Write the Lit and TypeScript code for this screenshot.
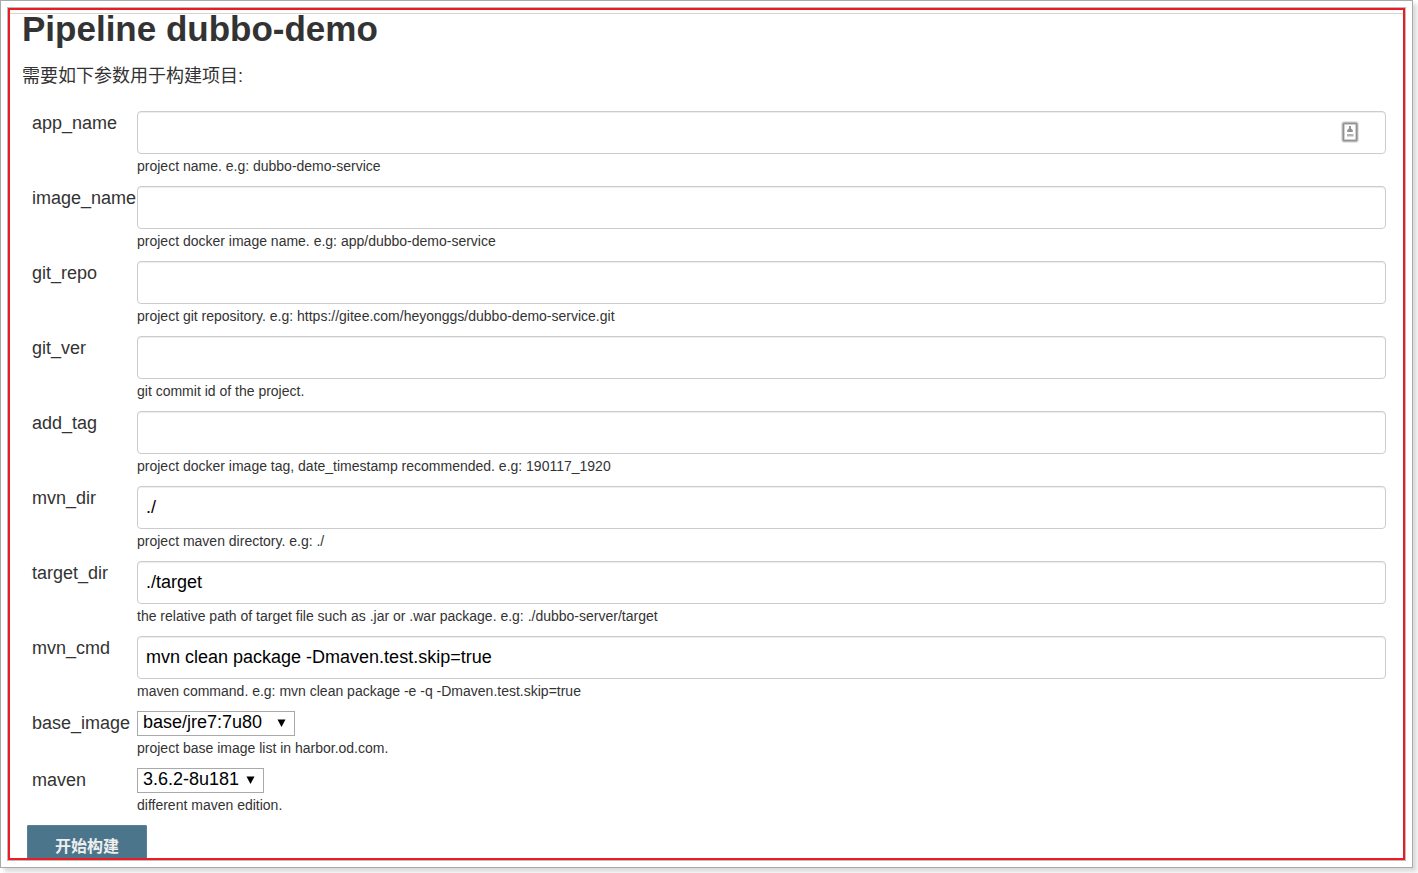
import { LitElement, html, css, nothing } from "lit";
import { customElement } from "lit/decorators.js";

interface Param {
  name: string;
  hint: string;
  value?: string;
  select?: boolean;
  wide?: boolean;
  autofill?: boolean;
}

const PARAMS: Param[] = [
  { name: "app_name", hint: "project name. e.g: dubbo-demo-service", autofill: true },
  { name: "image_name", hint: "project docker image name. e.g: app/dubbo-demo-service" },
  { name: "git_repo", hint: "project git repository. e.g: https://gitee.com/heyonggs/dubbo-demo-service.git" },
  { name: "git_ver", hint: "git commit id of the project." },
  { name: "add_tag", hint: "project docker image tag, date_timestamp recommended. e.g: 190117_1920" },
  { name: "mvn_dir", hint: "project maven directory. e.g: ./", value: "./" },
  {
    name: "target_dir",
    hint: "the relative path of target file such as .jar or .war package. e.g: ./dubbo-server/target",
    value: "./target",
  },
  {
    name: "mvn_cmd",
    hint: "maven command. e.g: mvn clean package -e -q -Dmaven.test.skip=true",
    value: "mvn clean package -Dmaven.test.skip=true",
  },
  { name: "base_image", hint: "project base image list in harbor.od.com.", value: "base/jre7:7u80", select: true, wide: true },
  { name: "maven", hint: "different maven edition.", value: "3.6.2-8u181", select: true },
];

@customElement("app-root")
export class AppRoot extends LitElement {
  static styles = css`
    :host {
      display: block;
      box-sizing: border-box;
      height: 100vh;
      padding: 0 5px 5px 0;
      overflow: hidden;
      background: #fff;
      color: #333;
      font: 18px/24px "Liberation Sans", "Noto Sans CJK SC", sans-serif;
    }
    * {
      box-sizing: border-box;
    }
    .frame {
      height: 100%;
      padding: 6px;
      border: 1px solid #a9a9a9;
      background: #fff;
      box-shadow: 4px 4px 4px rgba(0, 0, 0, 0.14);
    }
    .outline {
      height: 100%;
      border: 1px solid #bbb;
    }
    .panel {
      height: 100%;
      padding-top: 3px;
      border: 2px solid #ed1c24;
      overflow: hidden;
    }
    main {
      padding: 0 17px 0 12px;
      border-top: 1px solid #d3d7cf;
    }
    h1 {
      margin: 0 0 20px;
      font-size: 35px;
      line-height: 30px;
    }
    p {
      margin: 0 0 23px;
    }
    .params {
      display: grid;
      grid-template-columns: 105px minmax(0, 1fr);
      row-gap: 10px;
      padding-left: 10px;
    }
    .hint {
      padding-top: 2px;
      font-size: 14px;
      line-height: 20px;
    }
    .control {
      display: flex;
      position: relative;
    }
    .text {
      flex: 1;
      min-width: 0;
      height: 43px;
      margin: 0;
      padding: 0 8px;
      border: 1px solid #ccc;
      border-radius: 4px;
      background: #fff;
      box-shadow: inset 0 1px 1px rgba(0, 0, 0, 0.075);
      color: #000;
      font: inherit;
    }
    .select {
      height: 25px;
      margin: 0;
      padding: 0 23px 2px 5px;
      appearance: none;
      border: 1px solid #a9a9a9;
      border-radius: 0;
      background: #fff;
      color: #000;
      font: inherit;
      line-height: 21px;
    }
    .wide {
      min-width: 158px;
    }
    .picker {
      position: relative;
    }
    .picker,
    .select {
      display: block;
    }
    .arrow {
      position: absolute;
      top: 8px;
      right: 9px;
      pointer-events: none;
    }
    .autofill {
      position: absolute;
      top: 10px;
      right: 27px;
      pointer-events: none;
    }
    .build {
      display: block;
      height: 43px;
      margin: 10px 0 0 5px;
      padding: 0 27px;
      border: 1px solid #5a8097;
      border-radius: 1px;
      background: #4b758b;
      color: #eee;
      font: inherit;
      font-size: 16px;
      font-weight: bold;
    }
  `;

  private renderSelect(p: Param) {
    return html`<div class="picker">
      <select class="select ${p.wide ? "wide" : ""}" id=${p.name}>
        <option>${p.value}</option>
      </select>
      <svg class="arrow" width="9" height="9" viewBox="0 0 9 9" aria-hidden="true">
        <path d="M0.5 0.5H8.5L4.5 8Z" fill="#000" />
      </svg>
    </div>`;
  }

  private renderAutofill() {
    return html`<svg class="autofill" width="18" height="22" viewBox="0 0 18 22" aria-hidden="true">
      <rect x="2" y="2" width="14" height="18" rx="1" fill="#fff" stroke="#ddd" stroke-width="3.6" />
      <rect x="2.3" y="2.3" width="13.4" height="17.4" rx="1" fill="none" stroke="#929292" stroke-width="1.8" />
      <path d="M8 5h2v2.5l1.8 1.5v2H6.2V9L8 7.500Z" fill="#949494" />
      <rect x="6" y="13" width="6.500" height="2.500" fill="#b4b4b4" />
    </svg>`;
  }

  render() {
    return html`<div class="frame">
      <div class="outline">
        <div class="panel">
          <main>
            <h1>Pipeline dubbo-demo</h1>
            <p>需要如下参数用于构建项目:</p>
            <form @submit=${(e: Event) => e.preventDefault()}>
              <div class="params">
                ${PARAMS.map(
                  (p) => html`<label for=${p.name}>${p.name}</label>
                    <div>
                      <div class="control">
                        ${p.select
                          ? this.renderSelect(p)
                          : html`<input class="text" type="text" id=${p.name} .value=${p.value ?? ""} />`}
                        ${p.autofill ? this.renderAutofill() : nothing}
                      </div>
                      <div class="hint">${p.hint}</div>
                    </div>`
                )}
              </div>
              <button class="build" type="submit">开始构建</button>
            </form>
          </main>
        </div>
      </div>
    </div>`;
  }
}
